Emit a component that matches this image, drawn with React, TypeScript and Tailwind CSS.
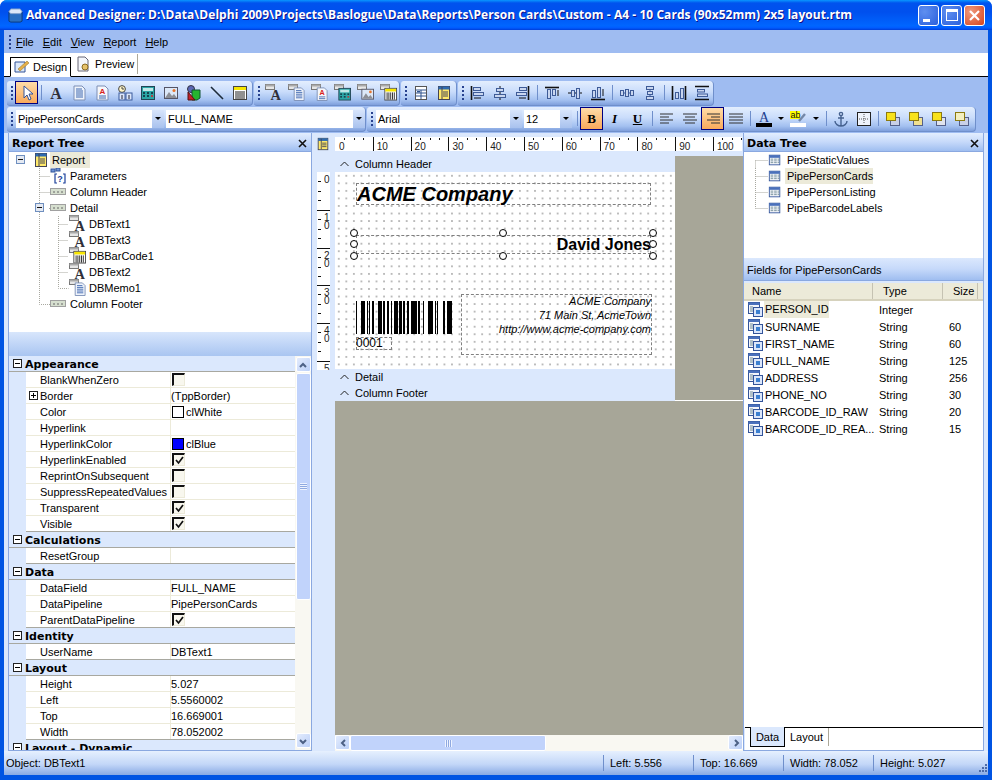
import type { ReactNode } from "react";

const band = "bg-[linear-gradient(#e3eefe_0%,#c9dcfb_45%,#a3c0f0_80%,#7f9fdc_100%)]";
const boldFace = "font-['DejaVu_Sans'] font-bold";

function Grip() {
  return (
    <div className="flex flex-col gap-[2px] w-[2px] shrink-0">
      <span className="w-[2px] h-[2px] bg-[#27418f]" />
      <span className="w-[2px] h-[2px] bg-[#27418f]" />
      <span className="w-[2px] h-[2px] bg-[#27418f]" />
      <span className="w-[2px] h-[2px] bg-[#27418f]" />
    </div>
  );
}

function Sep() {
  return <div className="w-px h-[15px] bg-[#6f8fcb] ml-[3px] mr-[2px] shrink-0" />;
}

function Glyph({ children, size = 16 }: { children: ReactNode; size?: number }) {
  return (
    <svg width={size} height={size} viewBox="0 0 16 16" className="shrink-0">
      {children}
    </svg>
  );
}

// base shapes used on toolbars and in the tree
const A = <text x="8" y="14" textAnchor="middle" fontFamily="Liberation Serif" fontWeight="700" fontSize="16" fill="#2f2f3a">A</text>;
const Memo = (
  <g>
    <path d="M3 1h8l3 3v11H3z" fill="#eef3fb" stroke="#7c8fb5" />
    <path d="M5 4h6M5 6h7M5 8h7M5 10h7M5 12h7" stroke="#3f68b0" />
  </g>
);
const Rich = (
  <g>
    <path d="M3 1h8l3 3v11H3z" fill="#f6f7fb" stroke="#7c8fb5" />
    <text x="8.5" y="9" textAnchor="middle" fontFamily="Liberation Sans" fontWeight="700" fontSize="8" fill="#d81e1e">A</text>
    <path d="M5 11h7M5 13h7" stroke="#3f68b0" />
  </g>
);
const Sys = (
  <g>
    <circle cx="5" cy="4" r="3.4" fill="#fff6c8" stroke="#444" />
    <path d="M5 2v2h2" stroke="#444" fill="none" />
    <rect x="2" y="8" width="6" height="7" fill="#dbe6fa" stroke="#3b5a9c" />
    <rect x="9" y="8" width="6" height="7" fill="#dbe6fa" stroke="#3b5a9c" />
    <path d="M5 10v4M12 10v4" stroke="#223" />
  </g>
);
const Calc = (
  <g>
    <rect x="1.5" y="1.5" width="13" height="13" fill="#2aa5a5" stroke="#245" />
    <rect x="3" y="3" width="10" height="3" fill="#bfe7e7" />
    <path d="M3 8h2M7 8h2M11 8h2M3 11h2M7 11h2" stroke="#123" strokeWidth="1.4" />
    <path d="M11 11h2" stroke="#d22" strokeWidth="1.4" />
  </g>
);
const Image = (
  <g>
    <rect x="1.5" y="2.5" width="13" height="11" fill="#dce8f8" stroke="#556" />
    <path d="M2 13l4-6 3 4 2-2 3 4z" fill="#8d8f96" />
    <circle cx="11" cy="5.5" r="1.5" fill="#e8742a" />
  </g>
);
const Shape = (
  <g>
    <circle cx="5" cy="4" r="3.5" fill="#5b67b5" stroke="#334" />
    <path d="M6 5h8v8l-3 2H6z" fill="#25b52f" stroke="#153" />
    <path d="M2 7v8h7z" fill="#c3212a" stroke="#511" />
  </g>
);
const Line = <path d="M2 2l12 12" stroke="#1d2b3a" strokeWidth="1.6" />;
const Bar = (
  <g>
    <rect x="1.5" y="1.5" width="13" height="13" fill="#fff" stroke="#444" />
    <rect x="2" y="2" width="12" height="3" fill="#f7e600" />
    <path d="M4 6v8M6 6v8M8 6v8M10 6v8M12 6v8" stroke="#222" />
  </g>
);
const Region = (
  <g>
    <rect x="2.5" y="1.5" width="11" height="13" fill="#fff" stroke="#555" />
    <path d="M3 5h10M3 8h10M3 11h10M8 5v9" stroke="#30558f" />
    <rect x="4" y="6" width="3" height="1.4" fill="#30558f" />
  </g>
);
const Tree = (
  <g>
    <rect x="2.5" y="1.5" width="11" height="13" fill="#ffe96a" stroke="#445" />
    <rect x="2.5" y="1.5" width="11" height="3" fill="#2f6ab0" />
    <path d="M6 2v12" stroke="#445" />
    <path d="M7 7h5M7 9h5M7 11h5" stroke="#445" />
  </g>
);
const Table = (
  <g>
    <rect x="1.5" y="2.5" width="12" height="11" fill="#f4f6fb" stroke="#33549a" />
    <rect x="1.5" y="2.5" width="12" height="3" fill="#4a70bb" />
    <path d="M3 7h3M7 7h3M11 7h2M3 9h3M7 9h3M11 9h2M3 11h3M7 11h3M11 11h2" stroke="#6f8a95" />
  </g>
);
const Field = (
  <g>
    <rect x="0.5" y="0.5" width="11" height="11" fill="#f4f6fb" stroke="#33549a" />
    <rect x="0.5" y="0.5" width="11" height="2.5" fill="#4a70bb" />
    <path d="M2 5h3M2 7h3M2 9h3" stroke="#6f8a95" />
    <rect x="5.5" y="5.5" width="9" height="9" fill="#dbe6fa" stroke="#33549a" />
    <rect x="8" y="8" width="4" height="4" fill="#3b7fd0" />
  </g>
);
const Band = (
  <g>
    <rect x="0.5" y="4.5" width="15" height="6" fill="#d6dfcf" stroke="#a0a0a0" />
    <path d="M3 8h2M7 8h2M11 8h2" stroke="#666" />
  </g>
);
const Params = (
  <g>
    <rect x="1" y="1" width="4" height="3" fill="#6d93d8" stroke="#33549a" />
    <rect x="6" y="0" width="4" height="3" fill="#6d93d8" stroke="#33549a" />
    <path d="M7 6H5v9h2M13 6h2v9h-2" fill="none" stroke="#1b3f9a" strokeWidth="1.2" />
    <text x="10" y="14" textAnchor="middle" fontFamily="Liberation Sans" fontWeight="700" fontSize="9" fill="#1b3f9a">?</text>
  </g>
);

function Tagged({ children, size = 18 }: { children: ReactNode; size?: number }) {
  return (
    <svg width={size} height={size} viewBox="0 0 18 18" className="shrink-0">
      <rect x="0.5" y="0.5" width="9" height="5" fill="#e6e6e6" stroke="#777" />
      <rect x="0.5" y="0.5" width="9" height="2" fill="#aaa" />
      <g transform="translate(3.5 3) scale(0.9)">{children}</g>
    </svg>
  );
}

// align and size glyphs
const lines = (ds: string, w = 1.5) => <path d={ds} stroke="#333" strokeWidth={w} fill="none" />;
const AlignL = <g><path d="M2.5 1v14" stroke="#111" strokeWidth="1.6" /><rect x="4.5" y="2.5" width="7" height="3" fill="#c9d6ef" stroke="#3e5b97" /><rect x="4.5" y="7.5" width="10" height="3" fill="#c9d6ef" stroke="#3e5b97" /><path d="M5 13h7" stroke="#111" /></g>;
const AlignC = <g><path d="M8 1v14" stroke="#111" /><rect x="4.5" y="3.5" width="7" height="3" fill="#c9d6ef" stroke="#3e5b97" /><rect x="2.5" y="9.5" width="11" height="3" fill="#c9d6ef" stroke="#3e5b97" /></g>;
const AlignR = <g><path d="M13.5 1v14" stroke="#111" strokeWidth="1.6" /><rect x="4.5" y="2.5" width="7" height="3" fill="#c9d6ef" stroke="#3e5b97" /><rect x="1.5" y="7.5" width="10" height="3" fill="#c9d6ef" stroke="#3e5b97" /><path d="M4 13h7" stroke="#111" /></g>;
const AlignT = <g><path d="M1 2.5h14" stroke="#111" strokeWidth="1.6" /><rect x="3.5" y="4.5" width="3" height="9" fill="#c9d6ef" stroke="#3e5b97" /><rect x="8.5" y="4.5" width="3" height="6" fill="#c9d6ef" stroke="#3e5b97" /><path d="M14 5v6" stroke="#111" /></g>;
const AlignM = <g><path d="M1 8h14" stroke="#111" /><rect x="4.5" y="5.5" width="3" height="6" fill="#c9d6ef" stroke="#3e5b97" /><rect x="9.5" y="3.5" width="3" height="10" fill="#c9d6ef" stroke="#3e5b97" /></g>;
const AlignB = <g><path d="M1 14.5h14" stroke="#111" strokeWidth="1.6" /><rect x="2.5" y="5.5" width="3" height="7" fill="#c9d6ef" stroke="#3e5b97" /><rect x="7.5" y="2.5" width="3" height="10" fill="#c9d6ef" stroke="#3e5b97" /><path d="M13 4v7" stroke="#111" /></g>;
const SpaceH = <g><path d="M1 8h14" stroke="#3e5b97" /><rect x="1.5" y="5.5" width="3" height="5" fill="#c9d6ef" stroke="#3e5b97" /><rect x="6.5" y="4.5" width="3" height="7" fill="#c9d6ef" stroke="#3e5b97" /><rect x="11.5" y="5.5" width="3" height="5" fill="#c9d6ef" stroke="#3e5b97" /></g>;
const SpaceV = <g><path d="M8 1v14" stroke="#3e5b97" /><rect x="4.5" y="1.5" width="7" height="3" fill="#c9d6ef" stroke="#3e5b97" /><rect x="5.5" y="6.5" width="5" height="3" fill="#c9d6ef" stroke="#3e5b97" /><rect x="4.5" y="11.5" width="7" height="3" fill="#c9d6ef" stroke="#3e5b97" /></g>;
const SizeH = <g><path d="M1.5 1v14M14.5 1v14" stroke="#111" strokeWidth="1.6" /><rect x="4.5" y="7.5" width="3" height="6" fill="#c9d6ef" stroke="#3e5b97" /><rect x="9.5" y="3.5" width="3" height="10" fill="#c9d6ef" stroke="#3e5b97" /></g>;
const SizeV = <g><path d="M1 1.5h14M1 14.5h14" stroke="#111" strokeWidth="1.6" /><rect x="3.5" y="4.5" width="7" height="2.5" fill="#c9d6ef" stroke="#3e5b97" /><rect x="3.5" y="9" width="10" height="2.5" fill="#c9d6ef" stroke="#3e5b97" /></g>;

const TxtL = lines("M1 3h13M1 6h9M1 9h13M1 12h9", 1.2);
const TxtC = lines("M1 3h14M3 6h10M1 9h14M3 12h10", 1.2);
const TxtR = lines("M2 3h13M6 6h9M2 9h13M6 12h9", 1.2);
const TxtJ = lines("M1 3h14M1 6h14M1 9h14M1 12h14", 1.2);

const Anchor = <g fill="none" stroke="#45618f" strokeWidth="1.4"><circle cx="8" cy="3" r="1.6" /><path d="M8 5v10M5 7h6M2 10c0 3 3 5 6 5s6-2 6-5" /></g>;
const Bounds = <g><rect x="1.5" y="1.5" width="13" height="13" fill="#eef3fb" stroke="#222" /><path d="M8 3v10M3 8h10" stroke="#555" strokeDasharray="1 1" /></g>;
const Layer = (a: string, b: string) => (
  <g>
    <rect x="5.5" y="6.5" width="9" height="8" fill={b} stroke="#54608a" />
    <rect x="1.5" y="1.5" width="9" height="8" fill={a} stroke="#8c7a10" />
  </g>
);

function Btn({ children, active = false }: { children: ReactNode; active?: boolean }) {
  return (
    <div
      className={
        active
          ? "w-[23px] h-[23px] flex items-center justify-center shrink-0 border border-[#000080] bg-[linear-gradient(#ffdca8,#f9a95b)]"
          : "w-[23px] h-[23px] flex items-center justify-center shrink-0"
      }
    >
      {children}
    </div>
  );
}

function Tb({ children, w }: { children: ReactNode; w: number }) {
  // toolbar band, width comes from the row it sits in
  return (
    <div
      style={{ width: w }}
      className={`h-[25px] flex items-center pl-[3px] rounded-r-[4px] rounded-l-[3px] border-r border-b border-[#6f8fcb] ${band}`}
    >
      <div className="ml-[1px] mr-[2px]">
        <Grip />
      </div>
      {children}
    </div>
  );
}

function Combo({ w, text, first = false }: { w: number; text: string; first?: boolean }) {
  return (
    <div style={{ width: w }} className={first ? "h-[18px] bg-white flex items-center shrink-0 mr-[2px] ml-px" : "h-[18px] bg-white flex items-center shrink-0 mr-[2px]"}>
      <span className="flex-1 pl-[2px] text-[11px] truncate">{text}</span>
      <div className="w-[12px] h-full bg-[linear-gradient(#d7e4fb,#a9c2ee)] flex items-center justify-center">
        <span className="w-0 h-0 border-x-[3px] border-x-transparent border-t-[3px] border-t-black" />
      </div>
    </div>
  );
}

function PanelHead({ title }: { title: string }) {
  return (
    <div className="h-[19px] shrink-0 flex items-center justify-between px-[2px] pt-[3px] bg-[linear-gradient(#e3eefe,#c6d9fa_50%,#9fbef0)] border-b border-[#8aa8e0]">
      <span className={`${boldFace} text-[11px] text-black pl-[1px]`}>{title}</span>
      <svg width="9" height="9" viewBox="0 0 9 9" className="mr-[2px]">
        <path d="M1 1l7 7M8 1L1 8" stroke="#111" strokeWidth="1.6" />
      </svg>
    </div>
  );
}

function Plus({ open = true }: { open?: boolean }) {
  return (
    <span className="w-[9px] h-[9px] border border-[#222] bg-white relative shrink-0 inline-block">
      <span className="absolute left-[1px] right-[1px] top-[3px] h-px bg-black" />
      {!open && <span className="absolute top-[1px] bottom-[1px] left-[3px] w-px bg-black" />}
    </span>
  );
}

function TreeBox({ x }: { x: number }) {
  return (
    <g transform={`translate(${x} 3)`}>
      <rect x="0.5" y="0.5" width="8" height="8" fill="#e4e9f2" stroke="#6f8fbf" />
      <path d="M2 4.5h5" stroke="#111" />
    </g>
  );
}

type TreeItem = { w: number; d: string; box?: number; icon: ReactNode; tagged?: boolean; text: string; hi?: boolean; gap: number };

const dot = "#a8a8a0";

const reportTree: TreeItem[] = [
  { w: 24, d: "", box: 7, icon: Tree, text: "Report", hi: true, gap: 4 },
  { w: 41, d: "M30.5 0v16M30.5 8.5h11", icon: Params, text: "Parameters", gap: 4 },
  { w: 41, d: "M30.5 0v16M30.5 8.5h11", icon: Band, text: "Column Header", gap: 4 },
  { w: 41, d: "M30.5 0v16M40 8.5h2", box: 26, icon: Band, text: "Detail", gap: 4 },
  { w: 60, d: "M30.5 0v16M49.5 0v16M49.5 8.5h10", icon: A, tagged: true, text: "DBText1", gap: 2 },
  { w: 60, d: "M30.5 0v16M49.5 0v16M49.5 8.5h10", icon: A, tagged: true, text: "DBText3", gap: 2 },
  { w: 60, d: "M30.5 0v16M49.5 0v16M49.5 8.5h10", icon: Bar, tagged: true, text: "DBBarCode1", gap: 2 },
  { w: 60, d: "M30.5 0v16M49.5 0v16M49.5 8.5h10", icon: A, tagged: true, text: "DBText2", gap: 2 },
  { w: 60, d: "M30.5 0v16M49.5 0v8.5h10", icon: Memo, tagged: true, text: "DBMemo1", gap: 2 },
  { w: 41, d: "M30.5 0v8.5h11", icon: Band, text: "Column Footer", gap: 4 },
];

function ReportTree() {
  return (
    <div className="h-[180px] shrink-0 bg-white overflow-hidden">
      {reportTree.map((r) => (
        <div key={r.text} className="h-4 flex items-center">
          <svg width={r.w} height={16} className="shrink-0">
            <path d={r.d} stroke={dot} strokeDasharray="1 1" fill="none" />
            {r.box !== undefined && <TreeBox x={r.box} />}
          </svg>
          {r.tagged ? <Tagged>{r.icon}</Tagged> : <Glyph>{r.icon}</Glyph>}
          <span className={r.hi ? "ml-[1px] px-[2px] h-4 w-[40px] leading-4 bg-[#ecead9]" : ""} style={r.hi ? undefined : { marginLeft: r.gap }}>
            {r.text}
          </span>
        </div>
      ))}
    </div>
  );
}

function Check({ on }: { on: boolean }) {
  return (
    <span className="w-[13px] h-[13px] bg-[#f8f7ee] border-l-2 border-t-2 border-[#111] border-r border-b border-r-[#ecead9] border-b-[#ecead9] flex items-center justify-center">
      {on && (
        <svg width="9" height="9" viewBox="0 0 9 9">
          <path d="M1 4l2.5 3L8 1" stroke="#111" strokeWidth="1.7" fill="none" />
        </svg>
      )}
    </span>
  );
}

type Prop = { name: string; value?: string; check?: boolean; swatch?: string; expand?: boolean };
const props: { cat: string; rows: Prop[] }[] = [
  {
    cat: "Appearance",
    rows: [
      { name: "BlankWhenZero", check: false },
      { name: "Border", value: "(TppBorder)", expand: true },
      { name: "Color", value: "clWhite", swatch: "bg-white" },
      { name: "Hyperlink" },
      { name: "HyperlinkColor", value: "clBlue", swatch: "bg-[#0000ff]" },
      { name: "HyperlinkEnabled", check: true },
      { name: "ReprintOnSubsequent", check: false },
      { name: "SuppressRepeatedValues", check: false },
      { name: "Transparent", check: true },
      { name: "Visible", check: true },
    ],
  },
  { cat: "Calculations", rows: [{ name: "ResetGroup" }] },
  {
    cat: "Data",
    rows: [
      { name: "DataField", value: "FULL_NAME" },
      { name: "DataPipeline", value: "PipePersonCards" },
      { name: "ParentDataPipeline", check: true },
    ],
  },
  { cat: "Identity", rows: [{ name: "UserName", value: "DBText1" }] },
  {
    cat: "Layout",
    rows: [
      { name: "Height", value: "5.027" },
      { name: "Left", value: "5.5560002" },
      { name: "Top", value: "16.669001" },
      { name: "Width", value: "78.052002" },
    ],
  },
  { cat: "Layout - Dynamic", rows: [] },
];

function PropGrid() {
  return (
    <div className="flex-1 min-w-0 overflow-hidden bg-[#dbe8fd]">
      {props.map((g) => (
        <div key={g.cat}>
          <div className={`h-4 flex items-center border-b border-[#a8a8a0] pl-[4px] ${boldFace}`}>
            <Plus />
            <span className="ml-[3px] pt-[2px]">{g.cat}</span>
          </div>
          {g.rows.map((r) => (
            <div key={r.name} className="h-4 flex ml-[17px] bg-white border-b border-[#ecead9] last:border-[#a8a8a0]">
              <div className="w-[145px] shrink-0 flex items-center border-r border-[#ecead9]">
                <span className="w-[14px] pl-[3px] flex items-center">{r.expand && <Plus open={false} />}</span>
                {r.name}
              </div>
              <div className="flex-1 flex items-center">
                {r.check !== undefined && (
                  <span className="ml-px">
                    <Check on={r.check} />
                  </span>
                )}
                {r.swatch && <span className={`w-[12px] h-[12px] border border-black ml-px mr-[2px] ${r.swatch}`} />}
                {r.value}
              </div>
            </div>
          ))}
        </div>
      ))}
    </div>
  );
}

function ScrollBtn({ dir }: { dir: "up" | "down" | "left" | "right" }) {
  const d = { up: "M2 7l3-3 3 3", down: "M2 4l3 3 3-3", left: "M7 2L4 5l3 3", right: "M4 2l3 3-3 3" }[dir];
  return (
    <div className="w-[15px] h-[15px] shrink-0 rounded-[2px] border border-white bg-[linear-gradient(135deg,#e3ecfd,#bcd0f8)] flex items-center justify-center">
      <svg width="10" height="10" viewBox="0 0 10 10">
        <path d={d} stroke="#4d6185" strokeWidth="2" fill="none" />
      </svg>
    </div>
  );
}

function Ruler() {
  const major = [0, 1, 2, 3, 4, 5, 6, 7, 8, 9, 10];
  return (
    <svg width="407" height="14" className="bg-white">
      {major.map((m) => (
        <g key={m}>
          {m > 0 && <path d={`M${Math.round(m * 37.8) + 0.5} 0v14`} stroke="#111" />}
          <path
            d={`M${Math.round(m * 37.8) + 9.5} 1v2M${Math.round(m * 37.8) + 19.5} 1v2M${Math.round(m * 37.8) + 28.5} 1v2`}
            stroke="#111"
          />
          <text x={m * 37.8 + 4} y="13" fontFamily="Liberation Sans" fontSize="10" fill="#222">
            {m * 10}
          </text>
        </g>
      ))}
    </svg>
  );
}

function VRuler() {
  const labels = [["0"], ["1", "0"], ["2", "0"], ["3", "0"], ["4", "0"], ["5"]];
  return (
    <svg width="13" height="198" className="bg-white shrink-0">
      {labels.map((l, i) => (
        <g key={i}>
          {i > 0 && <path d={`M0 ${Math.round(i * 37.8) + 0.5}h13`} stroke="#111" />}
          <path d={`M1 ${Math.round(i * 37.8) + 9.5}h3M1 ${Math.round(i * 37.8) + 19.5}h3M1 ${Math.round(i * 37.8) + 28.5}h3`} stroke="#111" />
          {l.map((c, j) => (
            <text key={j} x="7" y={i * 37.8 + 11 + j * 8} fontFamily="Liberation Sans" fontSize="10" fill="#222">
              {c}
            </text>
          ))}
        </g>
      ))}
    </svg>
  );
}

// start, width of each black bar
const bars = [
  [0, 1], [5, 4], [11, 1], [13, 1], [16, 2], [22, 4], [27, 2], [31, 2], [35, 1], [38, 4], [43, 3],
  [47, 2], [51, 2], [55, 6], [62, 2], [67, 1], [72, 5], [79, 1], [81, 1], [87, 2], [91, 5],
];

function Barcode() {
  return (
    <svg width="96" height="33" viewBox="0 0 96 33">
      {bars.map(([x, w]) => (
        <rect key={x} x={x} y="0" width={w} height="33" fill="#000" />
      ))}
    </svg>
  );
}

function Handle({ x, y }: { x: number; y: number }) {
  return <span style={{ left: x - 4, top: y - 4 }} className="absolute w-[8px] h-[8px] rounded-full border border-black bg-white" />;
}

function BandLabel({ text }: { text: string }) {
  return (
    <div className="h-4 flex items-center pl-[5px] bg-[#dbe8fd]">
      <svg width="9" height="6" viewBox="0 0 9 6" className="mr-[6px]">
        <path d="M0.5 5l4-4 4 4" stroke="#222" fill="none" />
      </svg>
      {text}
    </div>
  );
}

function Canvas() {
  const dash = "absolute border border-dashed border-[#808080]";
  return (
    <div className="relative w-[340px] h-[197px] bg-white bg-[radial-gradient(circle,#5a5a5a_0.55px,transparent_0.75px)] bg-[size:7.56px_7.56px] overflow-visible">
      <div className={`${dash} left-[21px] top-[11px] w-[295px] h-[22px]`} />
      <span className="absolute left-[22px] top-[10px] text-[20px] leading-[24px] font-bold italic font-['Liberation_Sans'] text-black">ACME Company</span>
      <div className={`${dash} left-[21px] top-[63px] w-[295px] h-[19px]`} />
      <span className="absolute right-[24px] top-[63px] text-[16px] leading-[19px] font-bold font-['Liberation_Sans'] text-black">David Jones</span>
      <Handle x={19} y={61} />
      <Handle x={168} y={61} />
      <Handle x={318} y={61} />
      <Handle x={19} y={72} />
      <Handle x={318} y={72} />
      <Handle x={19} y={84} />
      <Handle x={168} y={84} />
      <Handle x={318} y={84} />
      <div className="absolute left-[21px] top-[129px]">
        <Barcode />
      </div>
      <div className={`${dash} left-[21px] top-[165px] w-[36px] h-[13px]`} />
      <span className="absolute left-[21px] top-[164px] leading-[14px] text-[12px] font-['Liberation_Sans']">0001</span>
      <div className={`${dash} left-[126px] top-[122px] w-[191px] h-[61px]`} />
      <div className="absolute right-[24px] top-[122px] text-right italic text-[11px] leading-[14px] font-['Liberation_Sans']">
        <div>ACME Company</div>
        <div>71 Main St, AcmeTown</div>
        <div>http://www.acme-company.com</div>
      </div>
    </div>
  );
}

const pipes = ["PipeStaticValues", "PipePersonCards", "PipePersonListing", "PipeBarcodeLabels"];

const fields = [
  ["PERSON_ID", "Integer", ""],
  ["SURNAME", "String", "60"],
  ["FIRST_NAME", "String", "60"],
  ["FULL_NAME", "String", "125"],
  ["ADDRESS", "String", "256"],
  ["PHONE_NO", "String", "30"],
  ["BARCODE_ID_RAW", "String", "20"],
  ["BARCODE_ID_REA...", "String", "15"],
];

function Row1() {
  return (
    <div className="h-[26px] flex items-center pl-[3px] gap-px">
      <Tb w={246}>
        <Btn active>
          <Glyph>
            <path d="M5 1v12l3-3 2 5 2-1-2-5h4z" fill="#fff" stroke="#33549a" />
          </Glyph>
        </Btn>
        <Sep />
        <Btn><Glyph>{A}</Glyph></Btn>
        <Btn><Glyph>{Memo}</Glyph></Btn>
        <Btn><Glyph>{Rich}</Glyph></Btn>
        <Btn><Glyph>{Sys}</Glyph></Btn>
        <Btn><Glyph>{Calc}</Glyph></Btn>
        <Btn><Glyph>{Image}</Glyph></Btn>
        <Btn><Glyph>{Shape}</Glyph></Btn>
        <Btn><Glyph>{Line}</Glyph></Btn>
        <Btn><Glyph>{Bar}</Glyph></Btn>
      </Tb>
      <Tb w={146}>
        <Btn><Tagged>{A}</Tagged></Btn>
        <Btn><Tagged>{Memo}</Tagged></Btn>
        <Btn><Tagged>{Rich}</Tagged></Btn>
        <Btn><Tagged>{Calc}</Tagged></Btn>
        <Btn><Tagged>{Image}</Tagged></Btn>
        <Btn><Tagged>{Bar}</Tagged></Btn>
      </Tb>
      <Tb w={56}>
        <Btn><Glyph>{Region}</Glyph></Btn>
        <Btn><Glyph>{Tree}</Glyph></Btn>
      </Tb>
      <Tb w={256}>
        <div className="flex -ml-px">
          <Btn><Glyph>{AlignL}</Glyph></Btn>
          <Btn><Glyph>{AlignC}</Glyph></Btn>
          <Btn><Glyph>{AlignR}</Glyph></Btn>
        </div>
        <Sep />
        <Btn><Glyph>{AlignT}</Glyph></Btn>
        <Btn><Glyph>{AlignM}</Glyph></Btn>
        <Btn><Glyph>{AlignB}</Glyph></Btn>
        <Sep />
        <Btn><Glyph>{SpaceH}</Glyph></Btn>
        <Btn><Glyph>{SpaceV}</Glyph></Btn>
        <Sep />
        <Btn><Glyph>{SizeH}</Glyph></Btn>
        <Btn><Glyph>{SizeV}</Glyph></Btn>
      </Tb>
    </div>
  );
}

function Row2() {
  return (
    <div className="h-[26px] flex items-center pl-[3px] gap-px">
      <Tb w={359}>
        <Combo first w={148} text="PipePersonCards" />
        <Combo w={199} text="FULL_NAME" />
      </Tb>
      <Tb w={609}>
        <Combo first w={146} text="Arial" />
        <Combo w={48} text="12" />
        <Sep />
        <Btn active><span className="font-bold text-[13px] font-['Liberation_Serif']">B</span></Btn>
        <Btn><span className="italic font-bold text-[13px] font-['Liberation_Serif']">I</span></Btn>
        <Btn><span className="underline font-bold text-[13px] font-['Liberation_Serif']">U</span></Btn>
        <Sep />
        <Btn><Glyph>{TxtL}</Glyph></Btn>
        <Btn><Glyph>{TxtC}</Glyph></Btn>
        <Btn active><Glyph>{TxtR}</Glyph></Btn>
        <Btn><Glyph>{TxtJ}</Glyph></Btn>
        <Sep />
        <div className="flex items-center ml-[3px]">
          <Glyph>
            <text x="8" y="11" textAnchor="middle" fontFamily="Liberation Serif" fontSize="14" fill="#1f3f90">A</text>
            <rect x="0" y="12" width="16" height="4" fill="#000" />
          </Glyph>
          <span className="w-0 h-0 border-x-[3px] border-x-transparent border-t-[3px] border-t-black ml-[6px] mr-[6px] shrink-0" />
          <Glyph>
            <rect x="0" y="0" width="10" height="8" fill="#ffff00" />
            <text x="0.5" y="7" fontFamily="Liberation Sans" fontSize="9" fill="#111">ab</text>
            <path d="M9 10l6-7" stroke="#7488a8" strokeWidth="2.4" />
            <rect x="0" y="12" width="16" height="4" fill="#fff" />
          </Glyph>
          <span className="w-0 h-0 border-x-[3px] border-x-transparent border-t-[3px] border-t-black ml-[7px] mr-[4px] shrink-0" />
        </div>
        <Sep />
        <Btn><Glyph>{Anchor}</Glyph></Btn>
        <Btn><Glyph>{Bounds}</Glyph></Btn>
        <Sep />
        <Btn><Glyph>{Layer("#f8e21c", "#c9d0e8")}</Glyph></Btn>
        <Btn><Glyph>{Layer("#f8e21c", "#f0e090")}</Glyph></Btn>
        <Btn><Glyph>{Layer("#f8e21c", "#dfe3ee")}</Glyph></Btn>
        <Btn><Glyph>{Layer("#f3efc0", "#c9d0e8")}</Glyph></Btn>
      </Tb>
    </div>
  );
}

export default function App() {
  return (
    <div className="w-[992px] h-[780px] flex flex-col overflow-hidden bg-[#0054e3] text-[11px] leading-4 text-black font-['Liberation_Sans',sans-serif] rounded-t-[7px]">
      {/* Title bar */}
      <div className="h-[30px] shrink-0 flex items-center pl-[8px] pr-[7px] bg-[linear-gradient(#0997ff_0%,#0053ee_10%,#0050ee_40%,#0066ff_86%,#005bff_93%,#003dd7_100%)]">
        <svg width="15" height="15" viewBox="0 0 16 16" className="shrink-0">
          <path d="M1 4h14v10l-2 1H3l-2-1z" fill="#2a6fc0" stroke="#0d3a78" />
          <path d="M1 4l2-3h10l2 3-2 2H3z" fill="#dce8f8" stroke="#7f9fcc" />
        </svg>
        <span className="ml-[3px] flex-1 text-white font-bold text-[12px] font-['Open_Sans',sans-serif] tracking-[0.05px] whitespace-nowrap [text-shadow:1px_1px_#0f1089]">
          {"Advanced Designer: D:\\Data\\Delphi 2009\\Projects\\Baslogue\\Data\\Reports\\Person Cards\\Custom - A4 - 10 Cards (90x52mm) 2x5 layout.rtm"}
        </span>
        <div className="flex gap-[2px]">
          <div className="w-[21px] h-[21px] rounded-[3px] border border-white bg-[radial-gradient(circle_at_30%_30%,#5f8ff0,#2a5fdc)] flex items-end pl-[4px] pb-[3px]">
            <span className="w-[7px] h-[3px] bg-white" />
          </div>
          <div className="w-[21px] h-[21px] rounded-[3px] border border-white bg-[radial-gradient(circle_at_30%_30%,#5f8ff0,#2a5fdc)] flex items-center justify-center">
            <span className="w-[12px] h-[12px] border border-t-[3px] border-white" />
          </div>
          <div className="w-[21px] h-[21px] rounded-[3px] border border-white bg-[radial-gradient(circle_at_30%_30%,#ef9a7c,#d8431d)] flex items-center justify-center">
            <svg width="13" height="13" viewBox="0 0 13 13">
              <path d="M2 2l9 9M11 2l-9 9" stroke="#fff" strokeWidth="2.2" />
            </svg>
          </div>
        </div>
      </div>

      {/* Inside the window frame */}
      <div className="flex-1 min-h-0 mx-[4px] flex flex-col bg-[#9fbcf1]">
        <div className="h-[23px] shrink-0 flex items-center pl-[5px]">
          <Grip />
          <div className="flex gap-[9px] ml-[5px]">
            <span><u>F</u>ile</span>
            <span><u>E</u>dit</span>
            <span><u>V</u>iew</span>
            <span><u>R</u>eport</span>
            <span><u>H</u>elp</span>
          </div>
        </div>

        <div className="h-[24px] shrink-0 bg-white border-b border-black flex items-end pl-[6px]">
          <div className="h-[20px] w-[61px] -mb-px flex items-center gap-[3px] pl-[3px] bg-white border border-black border-b-white">
            <Glyph><path d="M1 3h10v10H1z" fill="#dce8f8" stroke="#33549a" /><path d="M4 10l9-8 2 2-9 8z" fill="#e6b04a" stroke="#8a6a20" strokeWidth="0.5" /></Glyph>
            Design
          </div>
          <div className="h-[20px] w-[67px] flex items-center gap-[4px] pl-[4px] border-r border-[#aca899] mb-[2px]">
            <Glyph><path d="M3 1h7l3 3v11H3z" fill="#f4f6fb" stroke="#667" /><circle cx="10" cy="11" r="3" fill="#e6c26a" stroke="#8a6a20" /></Glyph>
            Preview
          </div>
        </div>

        <div className="h-[56px] shrink-0 pt-[3px]">
          <Row1 />
          <Row2 />
        </div>

        {/* Panels */}
        <div className="h-[618px] shrink-0 flex bg-[#dbe8fd] pl-[4px]">
          <div className="w-[304px] shrink-0 flex flex-col border-x border-b border-[#8aa8e0] h-[618px]">
            <PanelHead title="Report Tree" />
            <ReportTree />
            <div className="h-[24px] shrink-0 bg-[linear-gradient(#d8e6fc,#a9c5f1)]" />
            <div className="flex-1 min-h-0 flex">
              <PropGrid />
              <div className="w-[16px] shrink-0 flex flex-col bg-[#f9f8f2] items-center pt-px">
                <ScrollBtn dir="up" />
                <div className="w-[15px] h-[227px] my-px rounded-[2px] border border-white bg-[#c1d3fb] flex items-center justify-center">
                  <div className="w-[7px] h-[7px] bg-[repeating-linear-gradient(#eef3ff_0_1px,#8fa9e0_1px_2px)]" />
                </div>
                <div className="flex-1" />
                <ScrollBtn dir="down" />
                <div className="h-[2px]" />
              </div>
            </div>
          </div>

          <div className="w-[430px] shrink-0 flex flex-col pt-[4px] ml-px">
            <div className="h-[15px] shrink-0 flex items-start pl-[3px]">
              <Glyph size={14}>{Tree}</Glyph>
              <div className="ml-[5px]">
                <Ruler />
              </div>
            </div>
            <div className="flex-1 min-h-0 flex">
              <div className="w-[22px] shrink-0 pt-[20px] pl-[4px]">
                <VRuler />
              </div>
              <div className="flex-1 min-w-0 flex flex-col bg-[#a7a698]">
                <div className="h-[249px] shrink-0 flex">
                  <div className="w-[340px] shrink-0 flex flex-col bg-[#dbe8fd]">
                    <div className="h-[20px] shrink-0 pt-[4px]">
                      <BandLabel text="Column Header" />
                    </div>
                    <Canvas />
                    <BandLabel text="Detail" />
                    <BandLabel text="Column Footer" />
                  </div>
                  <div className="flex-1 flex flex-col border-b border-white">
                    <div className="h-[4px] bg-[#dbe8fd]" />
                  </div>
                </div>
                <div className="flex-1" />
                <div className="h-[16px] shrink-0 flex bg-[#f9f8f2]">
                  <ScrollBtn dir="left" />
                  <div className="w-[196px] rounded-[2px] border border-white bg-[#c1d3fb] flex items-center justify-center">
                    <div className="w-[7px] h-[7px] bg-[repeating-linear-gradient(90deg,#eef3ff_0_1px,#8fa9e0_1px_2px)]" />
                  </div>
                  <div className="flex-1" />
                  <ScrollBtn dir="right" />
                </div>
              </div>
            </div>
          </div>

          <div className="w-[241px] shrink-0 flex flex-col border-x border-b border-[#8aa8e0] h-[618px]">
            <PanelHead title="Data Tree" />
            <div className="h-[106px] shrink-0 bg-white">
              {pipes.map((p, i) => (
                <div key={p} className="h-4 flex items-center">
                  <svg width="24" height="16" className="shrink-0">
                    <path d="M11.5 8.5H24" stroke={dot} strokeDasharray="1 1" fill="none" />
                    <path d={i === 0 ? "M11.5 8.5V16" : i === 3 ? "M11.5 0V8.5" : "M11.5 0V16"} stroke={dot} strokeDasharray="1 1" fill="none" />
                  </svg>
                  <Glyph size={14}>{Table}</Glyph>
                  <span className={i === 1 ? "ml-[3px] w-[88px] pl-[2px] h-4 bg-[#ecead9]" : "ml-[5px]"}>{p}</span>
                </div>
              ))}
            </div>
            <div className="h-[23px] shrink-0 flex items-center pl-[3px] pt-px bg-[linear-gradient(#dbe8fd,#c6d9fa_50%,#9fbef0)] border-b border-[#8aa8e0]">
              Fields for PipePersonCards
            </div>
            <div className="h-[18px] shrink-0 bg-[#ecead9] flex items-center border-b-2 border-[#d6d2bd] mt-[2px]">
              <span className="w-[129px] pl-[8px] border-r border-[#c5c2b2]">Name</span>
              <span className="w-[70px] pl-[10px] border-r border-[#c5c2b2]">Type</span>
              <span className="w-[35px] pl-[10px] border-r border-[#c5c2b2]">Size</span>
            </div>
            <div className="flex-1 min-h-0 bg-white">
              {fields.map((f, i) => (
                <div key={f[0]} className="h-[17px] flex items-center pl-[4px]">
                  <Glyph>{Field}</Glyph>
                  <span className={i === 0 ? "w-[115px] shrink-0" : "w-[115px] shrink-0 pl-[1px]"}>
                    <span className={i === 0 ? "inline-block h-[17px] leading-[17px] pl-[1px] w-[65px] bg-[#ecead9]" : ""}>{f[0]}</span>
                  </span>
                  <span className="w-[70px] shrink-0">{f[1]}</span>
                  <span>{f[2]}</span>
                </div>
              ))}
            </div>
            <div className="h-[23px] shrink-0 bg-white flex pl-[5px] border-t border-black ml-px">
              <div className="h-[20px] w-[35px] -mt-px flex items-center justify-center bg-[#dbe8fd] border-x border-b border-black">Data</div>
              <div className="h-[18px] w-[44px] flex items-center justify-center border-r border-[#aca899]">Layout</div>
            </div>
          </div>
        </div>

        {/* Status bar */}
        <div className="h-[24px] shrink-0 flex items-center bg-[linear-gradient(#e6f0fe,#c3d7f8_55%,#88a9e4)] pl-[2px] relative">
          <span className="w-[597px]">Object: DBText1</span>
          <span className="w-[90px] border-l border-[#6f8fcb] pl-[6px]">Left: 5.556</span>
          <span className="w-[90px] border-l border-[#6f8fcb] pl-[6px]">Top: 16.669</span>
          <span className="w-[90px] border-l border-[#6f8fcb] pl-[6px]">Width: 78.052</span>
          <span className="border-l border-[#6f8fcb] pl-[6px]">Height: 5.027</span>
          <svg width="10" height="10" viewBox="0 0 10 10" className="absolute right-[1px] bottom-[2px]">
            <path d="M8 1h2v2H8zM5 4h2v2H5zM8 4h2v2H8zM2 7h2v2H2zM5 7h2v2H5zM8 7h2v2H8z" fill="#4d6ba8" />
          </svg>
        </div>
      </div>
      <div className="h-[5px] shrink-0" />
    </div>
  );
}
